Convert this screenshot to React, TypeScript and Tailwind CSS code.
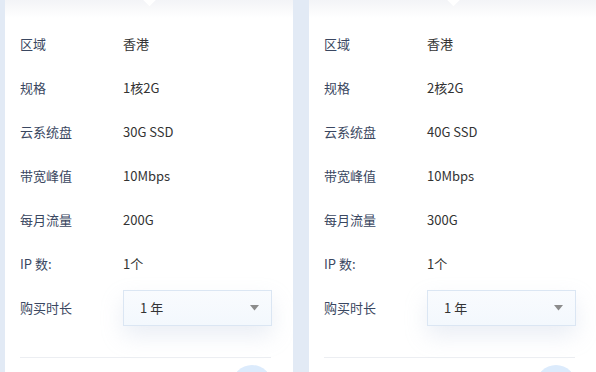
import React from "react";

type Row = { label: string; value: string };

const cards: Row[][] = [
  [
    { label: "区域", value: "香港" },
    { label: "规格", value: "1核2G" },
    { label: "云系统盘", value: "30G SSD" },
    { label: "带宽峰值", value: "10Mbps" },
    { label: "每月流量", value: "200G" },
    { label: "IP 数:", value: "1个" },
  ],
  [
    { label: "区域", value: "香港" },
    { label: "规格", value: "2核2G" },
    { label: "云系统盘", value: "40G SSD" },
    { label: "带宽峰值", value: "10Mbps" },
    { label: "每月流量", value: "300G" },
    { label: "IP 数:", value: "1个" },
  ],
];

function Card({ rows }: { rows: Row[] }) {
  return (
    <div className="relative w-[288px] shrink-0 h-[372px] bg-white overflow-hidden">
      <div className="absolute top-0 left-0 right-0 h-[18px] bg-gradient-to-b from-[#f3f4f7] to-white" />
      <div className="absolute top-[-7px] left-[139px] w-[11px] h-[11px] rotate-45 bg-white" />
      <div className="relative pt-[22px] px-[15px]">
        {rows.map((r) => (
          <div key={r.label} className="flex h-[44px] items-center text-[13px]">
            <span className="w-[103px] text-[#3a4761]">{r.label}</span>
            <span className="text-[#333]">{r.value}</span>
          </div>
        ))}
        <div className="flex h-[44px] items-center text-[13px]">
          <span className="w-[103px] text-[#3a4761]">购买时长</span>
          <div className="flex h-[36px] w-[149px] items-center justify-between border border-[#dbe6f3] bg-gradient-to-b from-[#f9fbfe] to-[#f3f8fd] pl-[16px] pr-[12px] shadow-[0_10px_22px_rgba(180,195,220,0.28)]">
            <span className="text-[#333]">1 年</span>
            <svg width="9" height="6" viewBox="0 0 9 6">
              <path d="M0 0 L9 0 L4.5 5.5 Z" fill="#8c8c8c" />
            </svg>
          </div>
        </div>
        <div className="mt-[27px] h-px w-[251px] bg-[#eceef2]" />
        <div className="ml-[212px] mt-[7px] h-[40px] w-[40px] rounded-full bg-[#dcebfc]" />
      </div>
    </div>
  );
}

export default function App() {
  return (
    <div
      className="flex h-[372px] w-[596px] gap-[16px] overflow-hidden bg-[#e2eaf5] pl-[5px]"
      style={{ fontFamily: '"Noto Sans CJK SC", "Microsoft YaHei", sans-serif' }}
    >
      {cards.map((c, i) => (
        <Card key={i} rows={c} />
      ))}
    </div>
  );
}
